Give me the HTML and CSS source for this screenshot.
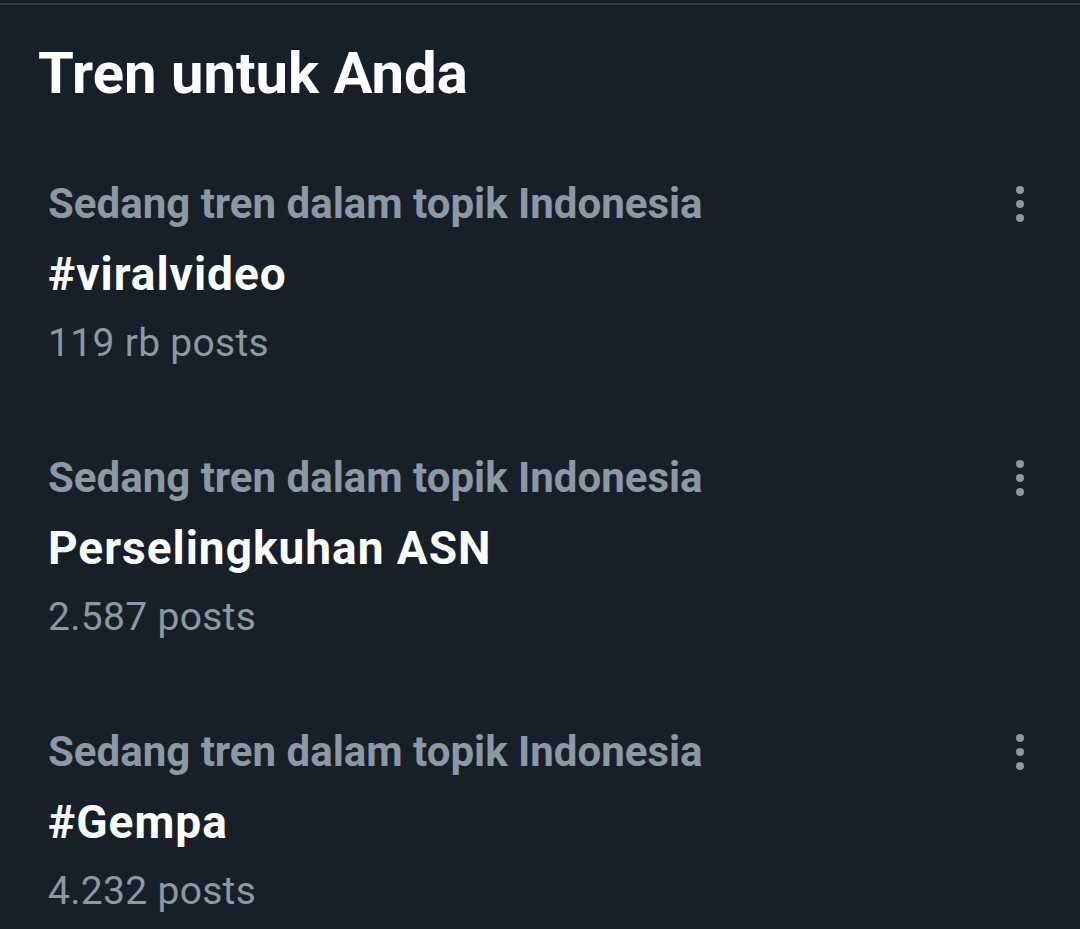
FILE: index.html
```html
<!DOCTYPE html>
<html>
<head>
<meta charset="utf-8">
<link rel="stylesheet" href="styles.css">
</head>
<body>
<div class="topline"></div>
<h1 class="title">Tren untuk Anda</h1>
<ul class="list">
  <li class="trend">
    <div class="head">
      <div class="cat">Sedang tren dalam topik Indonesia</div>
      <div class="more"><span></span><span></span><span></span></div>
    </div>
    <div class="name">#viralvideo</div>
    <div class="count">119 rb posts</div>
  </li>
  <li class="trend">
    <div class="head">
      <div class="cat">Sedang tren dalam topik Indonesia</div>
      <div class="more"><span></span><span></span><span></span></div>
    </div>
    <div class="name">Perselingkuhan ASN</div>
    <div class="count">2.587 posts</div>
  </li>
  <li class="trend">
    <div class="head">
      <div class="cat">Sedang tren dalam topik Indonesia</div>
      <div class="more"><span></span><span></span><span></span></div>
    </div>
    <div class="name">#Gempa</div>
    <div class="count">4.232 posts</div>
  </li>
</ul>
</body>
</html>
```
FILE: styles.css
```css
html, body {
  margin: 0;
  padding: 0;
  background: #171f29;
  width: 1080px;
  height: 929px;
  overflow: hidden;
  font-family: Roboto, "Open Sans", sans-serif;
}
.topline {
  height: 2px;
  margin-top: 3px;
  background: #2f3843;
}
.title {
  margin: 0;
  padding: 30px 0 0 38px;
  font-size: 58px;
  font-weight: 700;
  line-height: 76px;
  color: #ffffff;
}
.list {
  list-style: none;
  margin: 65px 0 0;
  padding: 0;
}
.trend {
  padding: 0 48px 80px;
  display: flex;
  flex-direction: column;
}
.head {
  display: flex;
  justify-content: space-between;
  align-items: center;
}
.cat {
  color: #8b98a5;
  font-size: 42px;
  font-weight: 700;
  line-height: 56px;
}
.name {
  color: #ffffff;
  font-size: 46px;
  font-weight: 700;
  line-height: 84px;
  letter-spacing: 1px;
}
.count {
  color: #8b98a5;
  font-size: 39px;
  line-height: 54px;
  letter-spacing: 0.3px;
}
.more {
  display: flex;
  flex-direction: column;
  gap: 6px;
  margin-right: 8px;
}
.more span {
  width: 8px;
  height: 8px;
  border-radius: 50%;
  background: #8b98a5;
}
```
